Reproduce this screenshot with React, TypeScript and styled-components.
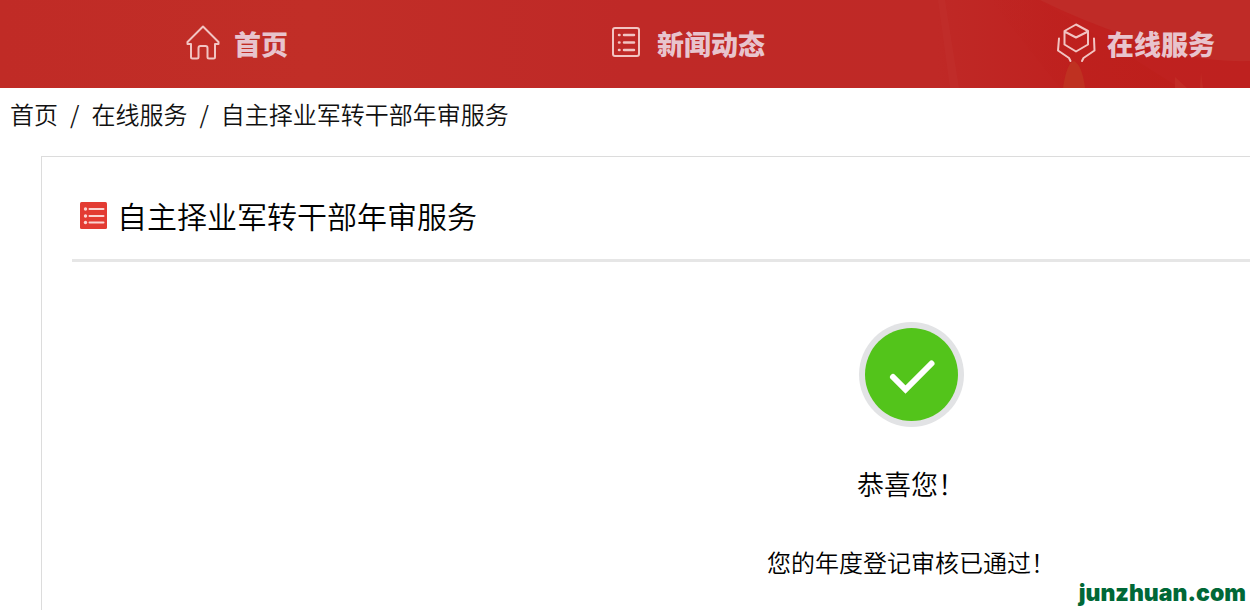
import React from 'react';
import styled, { createGlobalStyle } from 'styled-components';

const GlobalStyle = createGlobalStyle`
  * { box-sizing: border-box; }
  body {
    margin: 0;
    background: #fff;
    color: #000;
    font-family: "Noto Sans CJK SC", "Noto Sans", sans-serif;
    font-weight: 350;
  }
`;

const Page = styled.div`
  position: relative;
  display: flex;
  flex-direction: column;
  min-height: 100vh;
  overflow: hidden;
`;

const Header = styled.header`
  position: relative;
  overflow: hidden;
  background: #bf2a27;
`;

const Backdrop = styled.svg`
  position: absolute;
  inset: 0;
  width: 100%;
  height: 100%;
`;

const Nav = styled.nav`
  position: relative;
  display: grid;
  grid-template-columns: repeat(3, 36%);
  height: 88px;
`;

const NavLink = styled.a`
  display: flex;
  align-items: center;
  justify-content: center;
  gap: 11px;
  padding-left: 21px;
  color: #e8c4cd;
  font-size: 27px;
  font-weight: 900;
  line-height: 40px;
  text-decoration: none;
  white-space: nowrap;
`;

const NavIcon = styled.svg`
  flex: none;
  width: 40px;
  height: 40px;
  overflow: visible;
  fill: none;
  stroke: #f2c4c2;
  stroke-width: 2;
  stroke-linejoin: round;
  stroke-linecap: round;
`;

const Crumbs = styled.nav`
  display: flex;
  gap: 12px;
  padding: 9px 10px 11px;
  color: #111;
  font-size: 24px;
  line-height: 34px;
`;

const CrumbLink = styled.a`
  color: inherit;
  text-decoration: none;
`;

const Card = styled.main`
  flex: 1;
  width: 139.2%;
  margin: 14px 0 0 41px;
  padding: 34px 30px 20px;
  border: 1px solid #dcdcdc;
  border-bottom: 0;
`;

const CardHead = styled.div`
  display: flex;
  align-items: center;
  gap: 10px;
  padding: 0 8px 20px;
  border-bottom: 3px solid #e6e6e6;
`;

const ListBadge = styled.svg`
  flex: none;
  width: 27px;
  height: 27px;
`;

const Title = styled.h1`
  margin: 0;
  font-size: 30px;
  font-weight: 350;
  line-height: 48px;
`;

const Result = styled.section`
  display: flex;
  flex-direction: column;
  align-items: center;
  padding-top: 60px;
`;

const SuccessMark = styled.svg`
  width: 106px;
  height: 106px;
`;

const Congrats = styled.h2`
  margin: 36px 0 38px;
  font-size: 27px;
  font-weight: 350;
  line-height: 40px;
`;

const Message = styled.p`
  margin: 0;
  font-size: 24px;
  line-height: 40px;
`;

const SiteMark = styled.div`
  position: absolute;
  right: 4px;
  bottom: 4px;
  color: #006837;
  font-family: Inter, sans-serif;
  font-size: 23px;
  font-weight: 900;
  line-height: 26px;
`;

const HomeIcon = () => (
  <NavIcon viewBox="0 2 40 40" aria-hidden="true">
    <path d="M20 4.5 35.5 20v2H32v13q0 1.500-1.500 1.500H26q-1.500 0-1.500-1.500V26q0-2-2-2h-5q-2 0-2 2v9q0 1.500-1.500 1.500H9.500Q8 36.500 8 35V22H4.500v-2Z" />
  </NavIcon>
);

const NewsIcon = () => (
  <NavIcon viewBox="0 2 40 40" aria-hidden="true">
    <rect x="7" y="6" width="26" height="28" rx="2" />
    <path d="M18 13h10M18 20.500h10M18 28h10M13 13h.5M13 20.500h.5M13 28h.5" strokeWidth="2.500" />
  </NavIcon>
);

const ServiceIcon = () => (
  <NavIcon viewBox="0 2 40 40" aria-hidden="true">
    <path d="M20 2.500 32 9v13.500L20 29.500 8.500 22.500V9ZM8.500 9.500 20 15.500 32 9.500" />
    <path d="M3 16.500 2 28.500 13 36l1.500 3M38 16.500 38.500 28.500 27.500 36 26 39" />
  </NavIcon>
);

const navItems = [
  { label: '首页', Icon: HomeIcon },
  { label: '新闻动态', Icon: NewsIcon },
  { label: '在线服务', Icon: ServiceIcon },
];

export default function App() {
  return (
    <Page>
      <GlobalStyle />
      <Header>
        <Backdrop viewBox="0 0 1250 88" preserveAspectRatio="none" aria-hidden="true">
          <defs>
            <linearGradient id="sweep" x1="0" x2="1">
              <stop offset="0" stopColor="#c02b26" />
              <stop offset="0.250" stopColor="#c12e27" />
              <stop offset="0.500" stopColor="#bf2927" />
              <stop offset="0.750" stopColor="#bf2926" />
              <stop offset="0.860" stopColor="#bf211f" />
              <stop offset="1" stopColor="#be211f" />
            </linearGradient>
            <linearGradient id="beam" x1="0" x2="1">
              <stop offset="0" stopColor="#bd201d" stopOpacity="0" />
              <stop offset="1" stopColor="#bd1f1b" />
            </linearGradient>
          </defs>
          <rect width="1250" height="88" fill="url(#sweep)" />
          <path d="M938 0h7l14 88h-9Z" fill="#c33330" opacity="0.400" />
          <path d="M990 0h50l80 50 60 38H1060Z" fill="url(#beam)" />
          <path d="M1040 0h210v61q-60 2-120-24Q1080 20 1040 0Z" fill="#bf2b27" />
          <path d="M1063 88q4-26 11-27 8 4 11 27Z" fill="#bf3121" />
          <path d="M1175 77l12 11h13l1-16 2 16h-28Z" fill="#c22b25" />
        </Backdrop>
        <Nav aria-label="主导航">
          {navItems.map(({ label, Icon }) => (
            <NavLink href="#" key={label}>
              <Icon />
              <span>{label}</span>
            </NavLink>
          ))}
        </Nav>
      </Header>
      <Crumbs aria-label="面包屑">
        <CrumbLink href="#">首页</CrumbLink>
        <span>/</span>
        <CrumbLink href="#">在线服务</CrumbLink>
        <span>/</span>
        <span>自主择业军转干部年审服务</span>
      </Crumbs>
      <Card>
        <CardHead>
          <ListBadge viewBox="0 0 27 27" aria-hidden="true">
            <rect width="27" height="27" rx="1.500" fill="#e33b32" />
            <path d="M9.500 7h14M9.500 14h14M9.500 20.500h14" stroke="#fbd5d2" strokeWidth="2" strokeLinecap="round" />
            <g fill="#fbd5d2">
              <circle cx="5.500" cy="7" r="1.700" />
              <circle cx="5.500" cy="14" r="1.700" />
              <circle cx="5.500" cy="20.500" r="1.700" />
            </g>
          </ListBadge>
          <Title>自主择业军转干部年审服务</Title>
        </CardHead>
        <Result>
          <SuccessMark viewBox="0 0 106 106" role="img" aria-label="通过">
            <circle cx="53.500" cy="52.500" r="52.500" fill="#e2e3e5" />
            <circle cx="53.500" cy="52.500" r="46.500" fill="#53c41b" />
            <path d="M35 55 47.500 67.500 73.500 41.500" fill="none" stroke="#fff" strokeWidth="6" strokeLinecap="round" />
          </SuccessMark>
          <Congrats>恭喜您！</Congrats>
          <Message>您的年度登记审核已通过！</Message>
        </Result>
      </Card>
      <SiteMark>junzhuan.com</SiteMark>
    </Page>
  );
}
